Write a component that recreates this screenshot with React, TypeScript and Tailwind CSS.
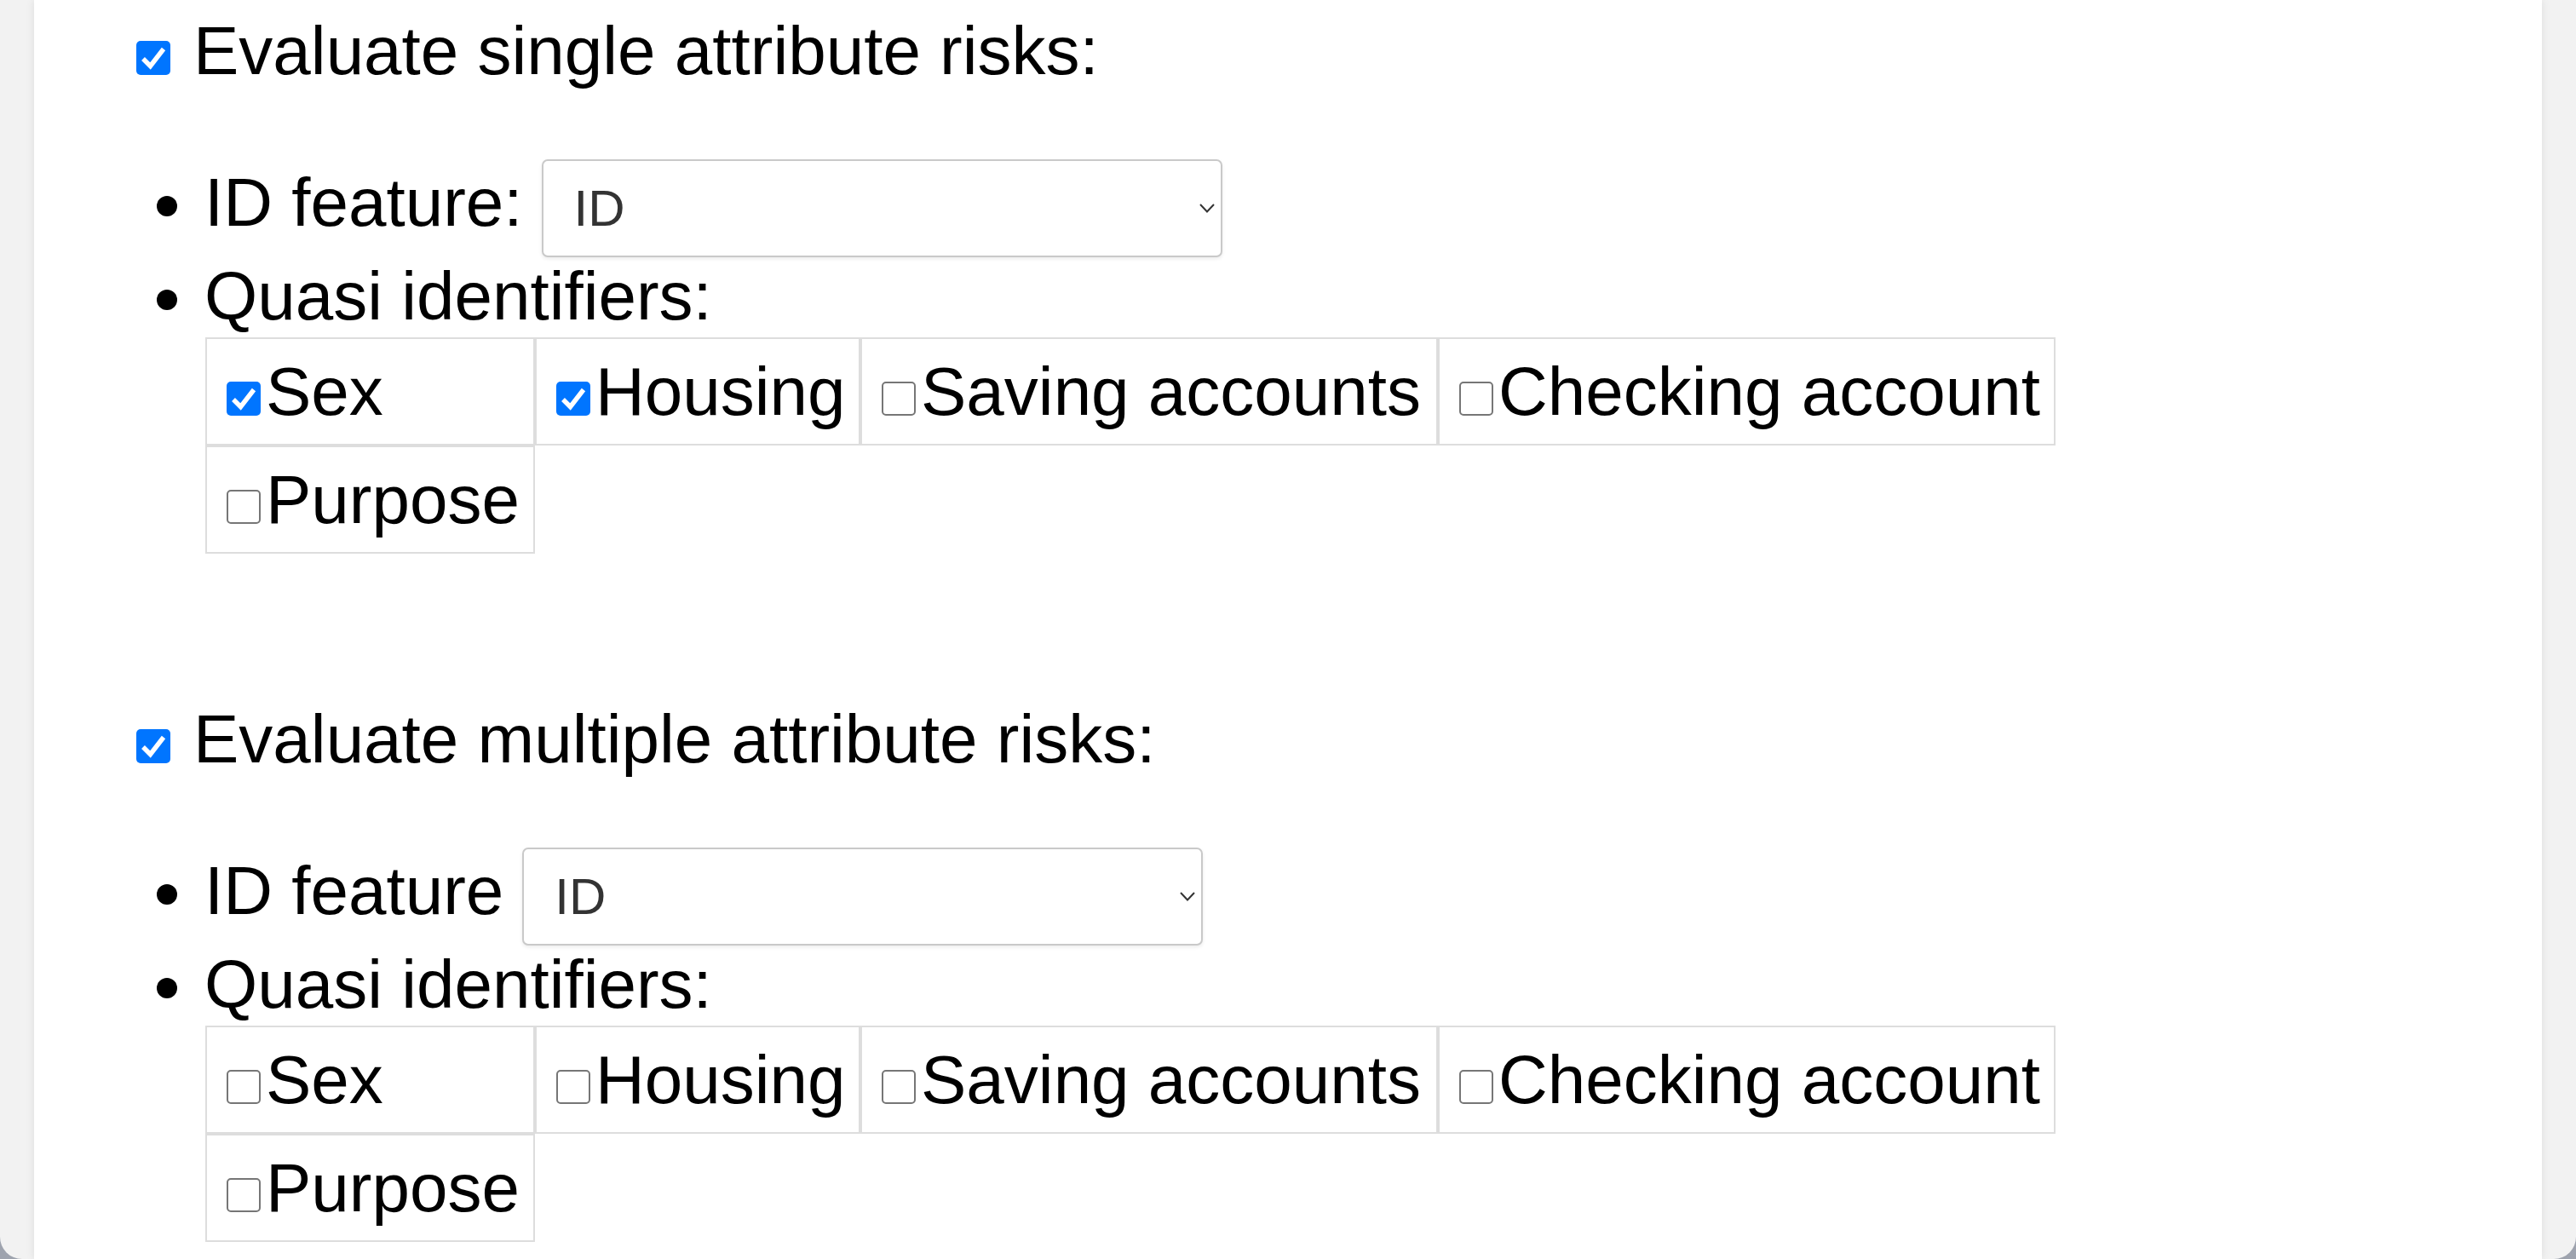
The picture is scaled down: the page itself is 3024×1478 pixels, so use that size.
import React from 'react';

type Option = { label: string; checked: boolean };

const Check = ({ checked, className = '' }: { checked: boolean; className?: string }) => (
  <span
    className={`flex h-[40px] w-[40px] shrink-0 items-center justify-center rounded-[5px] ${
      checked ? 'bg-[#0075ff]' : 'border-2 border-[#767676] bg-white'
    } ${className}`}
  >
    {checked && (
      <svg viewBox="0 0 40 40" className="h-[40px] w-[40px]">
        <path d="M8 21 L16.5 29.5 L32 9.5" fill="none" stroke="white" strokeWidth="5.5" />
      </svg>
    )}
  </span>
);

const Bullet = ({ top }: { top: string }) => (
  <span className={`h-[24px] w-[24px] shrink-0 rounded-full bg-black ${top}`} />
);

const Select = ({ className = '' }: { className?: string }) => (
  <div
    className={`flex h-[115px] w-[799px] items-center justify-between rounded-[7px] border-2 border-[#c9c9c9] bg-white pl-[36px] pr-[7px] shadow-[0_2px_4px_rgba(0,0,0,0.08)] ${className}`}
  >
    <span className="text-[60px] leading-none text-[#333]">ID</span>
    <svg viewBox="0 0 18 11" className="h-[11px] w-[18px]">
      <polyline points="1,1 9,9.5 17,1" fill="none" stroke="#333" strokeWidth="2" />
    </svg>
  </div>
);

const Section = ({
  title,
  idLabel,
  options,
  className = '',
}: {
  title: string;
  idLabel: string;
  options: Option[];
  className?: string;
}) => (
  <div className={className}>
    <div className="flex items-start pl-[120px]">
      <Check checked className="mt-[34px]" />
      <span className="ml-[27px] text-[80px] leading-[92px]">{title}</span>
    </div>

    <ul className="mt-[81px] pl-[144px]">
      <li className="flex items-start">
        <Bullet top="mt-[43px]" />
        <div className="ml-[32px] flex items-start">
          <span className="mt-[5px] text-[80px] leading-[92px]">{idLabel}</span>
          <Select className="ml-[22px]" />
        </div>
      </li>
      <li className="flex items-start">
        <Bullet top="mt-[38px]" />
        <div className="ml-[32px]">
          <div className="text-[80px] leading-[92px]">Quasi identifiers:</div>
          <div className="ml-[1px] mt-[2px] grid grid-cols-[387px_382px_678px_725px]">
            {options.map((o) => (
              <div
                key={o.label}
                className="flex h-[127px] items-center border-2 border-[#dddddd] pl-[23px]"
              >
                <Check checked={o.checked} className="mt-[16px]" />
                <span className="ml-[6px] whitespace-nowrap text-[80px] leading-[92px]">{o.label}</span>
              </div>
            ))}
          </div>
        </div>
      </li>
    </ul>
  </div>
);

const App = () => {
  const labels = ['Sex', 'Housing', 'Saving accounts', 'Checking account', 'Purpose'];
  const single = labels.map((l) => ({ label: l, checked: l === 'Sex' || l === 'Housing' }));
  const multiple = labels.map((l) => ({ label: l, checked: false }));

  return (
    <div className="h-[1478px] overflow-hidden bg-[#9ea3ae] font-['Liberation_Sans',Arial,sans-serif] text-black">
      <div className="h-full overflow-hidden rounded-b-[26px] bg-[#f2f2f2] px-[40px]">
        <div className="h-full bg-white pt-[14px] shadow-[0_0_10px_rgba(0,0,0,0.09)]">
          <Section title="Evaluate single attribute risks:" idLabel="ID feature:" options={single} />
          <Section
            title="Evaluate multiple attribute risks:"
            idLabel="ID feature"
            options={multiple}
            className="mt-[172px]"
          />
        </div>
      </div>
    </div>
  );
};

export default App;
